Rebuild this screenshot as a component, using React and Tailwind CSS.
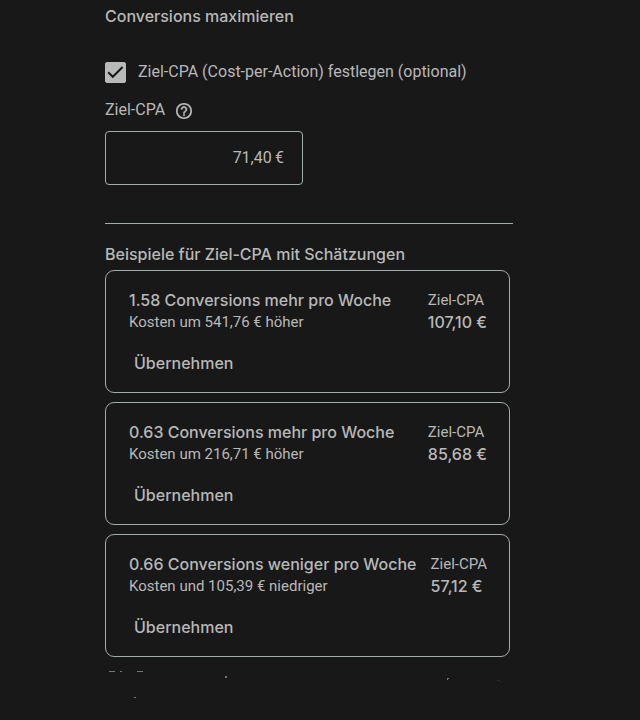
import { useState } from 'react';

const examples = [
    { title: '1.58 Conversions mehr pro Woche', cost: 'Kosten um 541,76 € höher', cpa: '107,10 €' },
    { title: '0.63 Conversions mehr pro Woche', cost: 'Kosten um 216,71 € höher', cpa: '85,68 €' },
    { title: '0.66 Conversions weniger pro Woche', cost: 'Kosten und 105,39 € niedriger', cpa: '57,12 €' },
];

function ExampleCard({ title, cost, cpa, onApply }) {
    return (
        <li className="rounded-[9px] border border-[#a2aeaa] pt-[18px] pb-3 pl-[23px] pr-[22px]">
            <div className="flex justify-between text-[15px] leading-[22px] whitespace-nowrap">
                <div>
                    <h3 className="font-['Inter',sans-serif] text-[16px] leading-[22px] font-medium">{title}</h3>
                    <p>{cost}</p>
                </div>
                <dl>
                    <dt>Ziel-CPA</dt>
                    <dd className="font-['Inter',sans-serif] text-[16px] leading-[22px] font-medium">{cpa}</dd>
                </dl>
            </div>
            <button
                type="button"
                onClick={onApply}
                className="mt-[13px] ml-[5px] block h-[34px] font-['Inter',sans-serif] text-[16px] font-medium"
            >
                Übernehmen
            </button>
        </li>
    );
}

export default function App() {
    const [enabled, setEnabled] = useState(true);
    const [target, setTarget] = useState('71,40\u2009€');

    return (
        <main className="min-h-screen bg-[#181818] pl-[105px] pr-4 font-['Roboto',sans-serif] text-[#b8b8b8]">
            <div className="max-w-[408px] pt-1">
                <h1 className="font-['Inter',sans-serif] text-[16px] leading-6 font-medium">
                    Conversions maximieren
                </h1>

                <label className="mt-8 flex h-6 items-center gap-3 text-base whitespace-nowrap">
                    <span className="grid size-[21px] shrink-0">
                        <input
                            type="checkbox"
                            checked={enabled}
                            onChange={(e) => setEnabled(e.target.checked)}
                            className="peer col-start-1 row-start-1 appearance-none rounded-[2px] border border-[#b8bab9] checked:bg-[#b8bab9]"
                        />
                        <svg
                            viewBox="0 0 21 21"
                            className="pointer-events-none invisible col-start-1 row-start-1 peer-checked:visible"
                            fill="none"
                            stroke="#181818"
                            strokeWidth="2"
                            aria-hidden="true"
                        >
                            <path d="M3.2 10.2l4.6 4.6L17.6 5" />
                        </svg>
                    </span>
                    Ziel-CPA (Cost-per-Action) festlegen (optional)
                </label>

                <div className="mt-[14px] flex h-6 items-center gap-[11px] text-base">
                    <label htmlFor="target-cpa">Ziel-CPA</label>
                    <button type="button" aria-label="Hilfe zu Ziel-CPA" className="mt-[2px]">
                        <svg
                            viewBox="2 2 20 20"
                            className="size-4"
                            fill="currentColor"
                            stroke="currentColor"
                            strokeWidth="0.4"
                            aria-hidden="true"
                        >
                            <path d="M11 18h2v-2h-2v2zm1-16C6.48 2 2 6.48 2 12s4.48 10 10 10 10-4.48 10-10S17.52 2 12 2zm0 18c-4.41 0-8-3.59-8-8s3.59-8 8-8 8 3.59 8 8-3.59 8-8 8zm0-14c-2.21 0-4 1.79-4 4h2c0-1.1.9-2 2-2s2 .9 2 2c0 2-3 1.75-3 5h2c0-2.25 3-2.5 3-5 0-2.21-1.79-4-4-4z" />
                        </svg>
                    </button>
                </div>
                <input
                    id="target-cpa"
                    type="text"
                    value={target}
                    onChange={(e) => setTarget(e.target.value)}
                    className="mt-[9px] block h-[54px] w-[198px] rounded border border-[#a2aeaa] bg-transparent pr-[18px] pb-0.5 text-right text-base"
                />

                <hr className="mt-[38px] border-[#a2aeaa]" />

                <h2 className="mt-[18px] font-['Inter',sans-serif] text-[16px] leading-6 font-medium">
                    Beispiele für Ziel-CPA mit Schätzungen
                </h2>
                <ul className="mt-1 mr-[3px] flex flex-col gap-[9px]">
                    {examples.map((example) => (
                        <ExampleCard key={example.title} {...example} onApply={() => setTarget(example.cpa)} />
                    ))}
                </ul>

                {/* faint specks below the list */}
                <svg viewBox="0 0 408 40" className="mt-[9px] w-full" fill="#777" aria-hidden="true">
                    <path d="M4 5h6v1h-6zM15 5h2v1h-2zM32 5h6v1h-6zM120 10h2v2h-2zM342 12h2v1h-1v1h-1zM29 31h2v1h-2z" />
                    <path d="M392 14h2v1h-2zM395 15h1v1h-1z" fill="#442b2e" />
                </svg>
            </div>
        </main>
    );
}
